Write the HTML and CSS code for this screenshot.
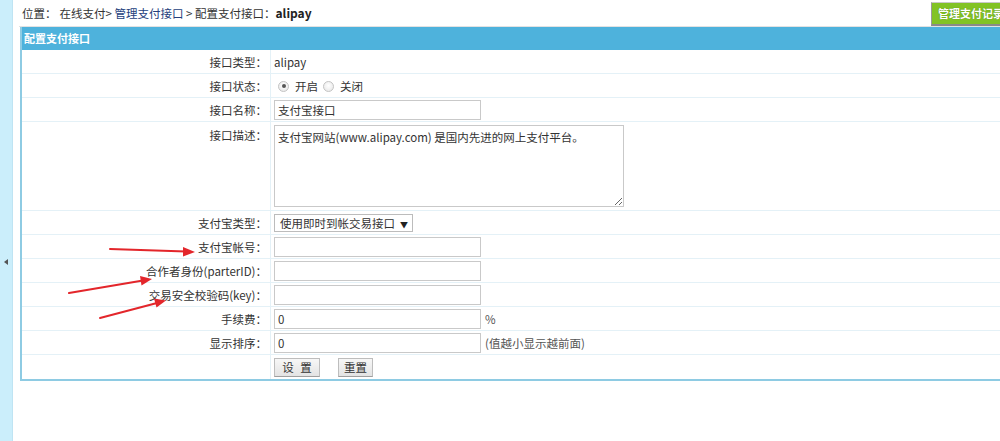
FILE: index.html
```html
<!DOCTYPE html>
<html lang="zh">
<head>
<meta charset="utf-8">
<title>配置支付接口</title>
<link rel="stylesheet" href="styles.css">
</head>
<body>
<div class="page">
  <aside class="sidebar"><span class="toggle"></span></aside>
  <main class="main">
    <div class="topbar">
      <div class="crumb">位置：<span class="sp"></span>在线支付&gt; <a class="link">管理支付接口</a> &gt; 配置支付接口：<b>alipay</b></div>
      <span class="btn-green">管理支付记录</span>
    </div>
    <table class="form">
      <thead><tr><th colspan="2">配置支付接口</th></tr></thead>
      <tbody>
        <tr><td class="lbl">接口类型：</td><td class="val">alipay</td></tr>
        <tr><td class="lbl">接口状态：</td><td class="val"><span class="radio on"></span>开启<span class="radio"></span>关闭</td></tr>
        <tr><td class="lbl">接口名称：</td><td class="val"><input class="ipt" type="text" value="支付宝接口"></td></tr>
        <tr class="tall"><td class="lbl top">接口描述：</td><td class="val"><textarea class="area">支付宝网站(www.alipay.com) 是国内先进的网上支付平台。</textarea></td></tr>
        <tr><td class="lbl">支付宝类型：</td><td class="val"><span class="select">使用即时到帐交易接口<span class="caret">▼</span></span></td></tr>
        <tr><td class="lbl">支付宝帐号：</td><td class="val"><input class="ipt" type="text" value=""></td></tr>
        <tr><td class="lbl">合作者身份(parterID)：</td><td class="val"><input class="ipt" type="text" value=""></td></tr>
        <tr><td class="lbl">交易安全校验码(key)：</td><td class="val"><input class="ipt" type="text" value=""></td></tr>
        <tr><td class="lbl">手续费：</td><td class="val"><input class="ipt" type="text" value="0"><span class="note">%</span></td></tr>
        <tr><td class="lbl">显示排序：</td><td class="val"><input class="ipt" type="text" value="0"><span class="note">(值越小显示越前面)</span></td></tr>
        <tr><td class="lbl"></td><td class="val"><span class="btn btn-set">设 置</span><span class="btn btn-reset">重置</span></td></tr>
      </tbody>
    </table>
  </main>
</div>
<svg class="arrows" width="1000" height="441" viewBox="0 0 1000 441">
  <g stroke="#e3262b" stroke-width="2" fill="#e3262b" stroke-linecap="round">
    <line x1="110" y1="249" x2="186" y2="251.5"/>
    <polygon stroke="none" points="195,252 183,247 183,256.5"/>
    <line x1="69" y1="293" x2="143" y2="280.5"/>
    <polygon stroke="none" points="152,279 140,276 141.5,285.5"/>
    <line x1="100" y1="318" x2="157" y2="303"/>
    <polygon stroke="none" points="166,300.5 154,298.5 156.5,307.5"/>
  </g>
</svg>
</body>
</html>
```
FILE: styles.css
```css
html, body {
  margin: 0;
  padding: 0;
  width: 1000px;
  height: 441px;
  overflow: hidden;
  background: #fff;
  font-family: "Noto Sans CJK SC", "Liberation Sans", sans-serif;
  font-size: 11.5px;
  color: #333;
}

.page {
  display: flex;
  height: 441px;
}

.sidebar {
  width: 12px;
  flex: none;
  background: #cbeefb;
  border-right: 1px solid #bfe4f3;
  display: flex;
  flex-direction: column;
  align-items: center;
}

.toggle {
  margin-top: 259px;
  width: 0;
  height: 0;
  border-top: 3px solid transparent;
  border-bottom: 3px solid transparent;
  border-right: 4px solid #555;
}

.main {
  flex: none;
  width: 1000px;
  padding-left: 6px;
}

.topbar {
  height: 27px;
  display: flex;
  align-items: center;
  justify-content: space-between;
  border-bottom: 1px solid #e2e2e2;
  box-sizing: border-box;
}

.crumb {
  padding-left: 3px;
  line-height: 20px;
  padding-bottom: 1px;
  white-space: nowrap;
}

.sp {
  display: inline-block;
  width: 3px;
}

.link {
  color: #24407c;
  text-decoration: none;
}

.crumb b {
  font-weight: bold;
  color: #222;
  font-size: 12px;
}

.btn-green {
  margin-right: 1px;
  align-self: flex-start;
  margin-top: 2px;
  height: 21px;
  line-height: 21px;
  padding: 0 6px;
  width: 74px;
  background: #82c325;
  color: #fff;
  font-weight: bold;
  font-size: 11px;
  border-left: 1px solid #9a9a9a;
  border-bottom: 2px solid #8a8a8a;
  border-top: 1px solid #c9c9c9;
  text-shadow: 0 0 1px #4d7a10;
  white-space: nowrap;
}

.form {
  margin-left: 1px;
  width: 992px;
  border-collapse: collapse;
  border-left: 2px solid #8ecbe3;
  border-bottom: 2px solid #8ecbe3;
  line-height: 16px;
}

.form th {
  background: #4eb2dc;
  color: #fff;
  text-align: left;
  font-weight: bold;
  font-size: 11px;
  height: 23px;
  padding: 0 0 0 2px;
  line-height: 23px;
}

.form td {
  border-bottom: 1px solid #e4f1f7;
  padding: 0;
  height: 23px;
}

.form tr:last-child td {
  border-bottom: none;
  height: 24px;
}

.lbl {
  width: 245px;
  text-align: right;
  padding-right: 3px !important;
  border-right: 1px solid #e4f1f7;
  white-space: nowrap;
}

.lbl.top {
  vertical-align: top;
  padding-top: 5px !important;
}

.val {
  padding-left: 3px !important;
  white-space: nowrap;
}

.tall td {
  height: 83px;
}

.radio {
  display: inline-block;
  width: 11px;
  height: 11px;
  border-radius: 50%;
  border: 1px solid #c4c4c4;
  background: radial-gradient(circle at 50% 40%, #fff, #e4e4e4);
  box-sizing: border-box;
  vertical-align: -1px;
  margin: 0 6px 0 4px;
  position: relative;
}

.radio:not(.on) {
  margin-left: 5px;
}

.radio.on::after {
  content: "";
  position: absolute;
  left: 2.5px;
  top: 2.5px;
  width: 4px;
  height: 4px;
  border-radius: 50%;
  background: #555;
}

.ipt {
  display: inline-block;
  width: 207px;
  height: 20px;
  box-sizing: border-box;
  border: 1px solid #c9c9c9;
  padding: 0 3px;
  font: inherit;
  color: #333;
  vertical-align: middle;
  margin: 0;
}

.note {
  margin-left: 4px;
  color: #555;
  vertical-align: middle;
}

.area {
  display: block;
  width: 350px;
  height: 82px;
  box-sizing: border-box;
  border: 1px solid #c9c9c9;
  padding: 3px 3px;
  font: inherit;
  line-height: 16px;
  color: #333;
  resize: both;
  margin: 0;
}

.select {
  display: inline-block;
  height: 18px;
  line-height: 16px;
  box-sizing: border-box;
  border: 1px solid #bcbcbc;
  padding: 0 4px 0 5px;
  background: #fff;
  vertical-align: middle;
  white-space: nowrap;
}

.caret {
  font-size: 8px;
  margin-left: 5px;
  color: #222;
}

.btn {
  display: inline-block;
  height: 19px;
  line-height: 17px;
  box-sizing: border-box;
  border: 1px solid #bdbdbd;
  border-bottom-color: #9f9f9f;
  background: linear-gradient(#f7f7f7, #e3e3e3);
  color: #333;
  text-align: center;
  vertical-align: middle;
}

.btn-set {
  width: 46px;
  letter-spacing: 2px;
  padding-left: 2px;
}

.btn-reset {
  width: 35px;
  margin-left: 18px;
}

.arrows {
  position: absolute;
  left: 0;
  top: 0;
  pointer-events: none;
}
```
